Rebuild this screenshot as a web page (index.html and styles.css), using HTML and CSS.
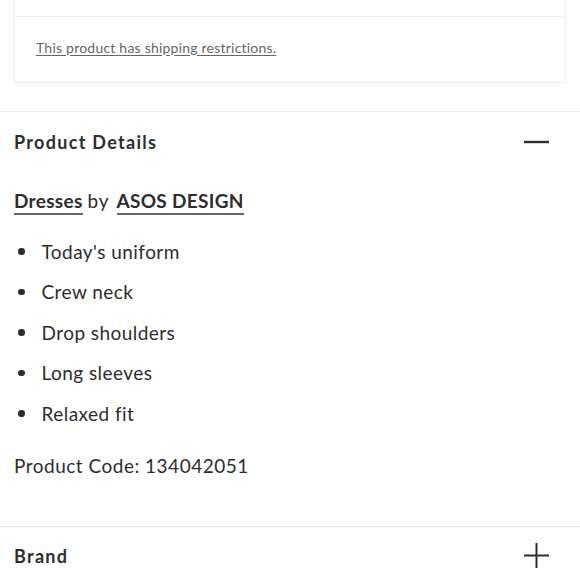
FILE: index.html
```html
<!DOCTYPE html>
<html lang="en">
<head>
<meta charset="utf-8">
<title>Product Details</title>
<link rel="stylesheet" href="styles.css">
</head>
<body>
<div class="page">
  <div class="ship-box">
    <div class="ship-top"></div>
    <div class="ship-bottom">
      <a class="ship-link" href="#">This product has shipping restrictions.</a>
    </div>
  </div>

  <section class="accordion open">
    <div class="acc-head">
      <h2 class="acc-title">Product Details</h2>
      <svg class="acc-icon" width="26" height="26" viewBox="0 0 26 26" aria-hidden="true">
        <path d="M0 13h25" stroke="#2d2d2d" stroke-width="2.4" fill="none"/>
      </svg>
    </div>
    <div class="acc-body">
      <p class="category"><a class="strong-link" href="#">Dresses</a> <span class="by">by</span> <a class="strong-link" href="#">ASOS DESIGN</a></p>
      <ul class="features">
        <li>Today's uniform</li>
        <li>Crew neck</li>
        <li>Drop shoulders</li>
        <li>Long sleeves</li>
        <li>Relaxed fit</li>
      </ul>
      <p class="code">Product Code: 134042051</p>
    </div>
  </section>

  <section class="accordion">
    <div class="acc-head">
      <h2 class="acc-title">Brand</h2>
      <svg class="acc-icon" width="26" height="26" viewBox="0 0 26 26" aria-hidden="true">
        <path d="M0 12.5h25M12.5 0v25" stroke="#2d2d2d" stroke-width="2" fill="none"/>
      </svg>
    </div>
  </section>
</div>
</body>
</html>
```

FILE: styles.css
```css
* { box-sizing: border-box; }
html, body { margin: 0; padding: 0; background: #fff; }
body {
  font-family: "Lato", "Liberation Sans", sans-serif;
  color: #2d2d2d;
}
.page { width: 580px; height: 580px; overflow: hidden; }

.ship-box {
  margin: 0 14px;
  border: 1px solid #eee;
  border-top: none;
}
.ship-top { height: 17px; border-bottom: 1px solid #eee; }
.ship-bottom {
  height: 65px;
  display: flex;
  align-items: center;
  padding: 0 21px 5px;
}
.ship-link {
  font-size: 14px;
  color: #666;
  text-decoration: underline;
  text-underline-offset: 2px;
  letter-spacing: 0.22px;
}

.accordion { border-top: 1px solid #eee; margin-top: 28px; }
.accordion + .accordion { margin-top: 0; }
.acc-head {
  height: 59px;
  display: flex;
  align-items: center;
  justify-content: space-between;
  padding: 0 30px 0 14px;
}
.acc-title {
  margin: 0;
  font-size: 18px;
  font-weight: 700;
  letter-spacing: 1.3px;
}
.acc-icon { display: block; }

.acc-body { padding: 0 14px 47px; }
.category {
  margin: 17px 0 0;
  font-size: 19px;
  line-height: 26px;
}
.strong-link {
  color: #2d2d2d;
  font-weight: 700;
  letter-spacing: 0.3px;
  text-decoration: none;
  border-bottom: 2px solid #666;
  padding-bottom: 1px;
}
.by { font-weight: 400; letter-spacing: 1px; margin-right: 2px; }

.features {
  list-style: none;
  margin: 17px 0 0;
  padding: 0;
}
.features li {
  display: flex;
  align-items: center;
  height: 40.5px;
  font-size: 19px;
  letter-spacing: 0.45px;
}
.features li::before {
  content: "";
  width: 6.5px;
  height: 6.5px;
  border-radius: 50%;
  background: #2d2d2d;
  margin: 0 17px 0 4px;
  flex: none;
}
.code {
  margin: 19px 0 0;
  font-size: 19px;
  line-height: 26px;
  letter-spacing: 0.5px;
}
```
